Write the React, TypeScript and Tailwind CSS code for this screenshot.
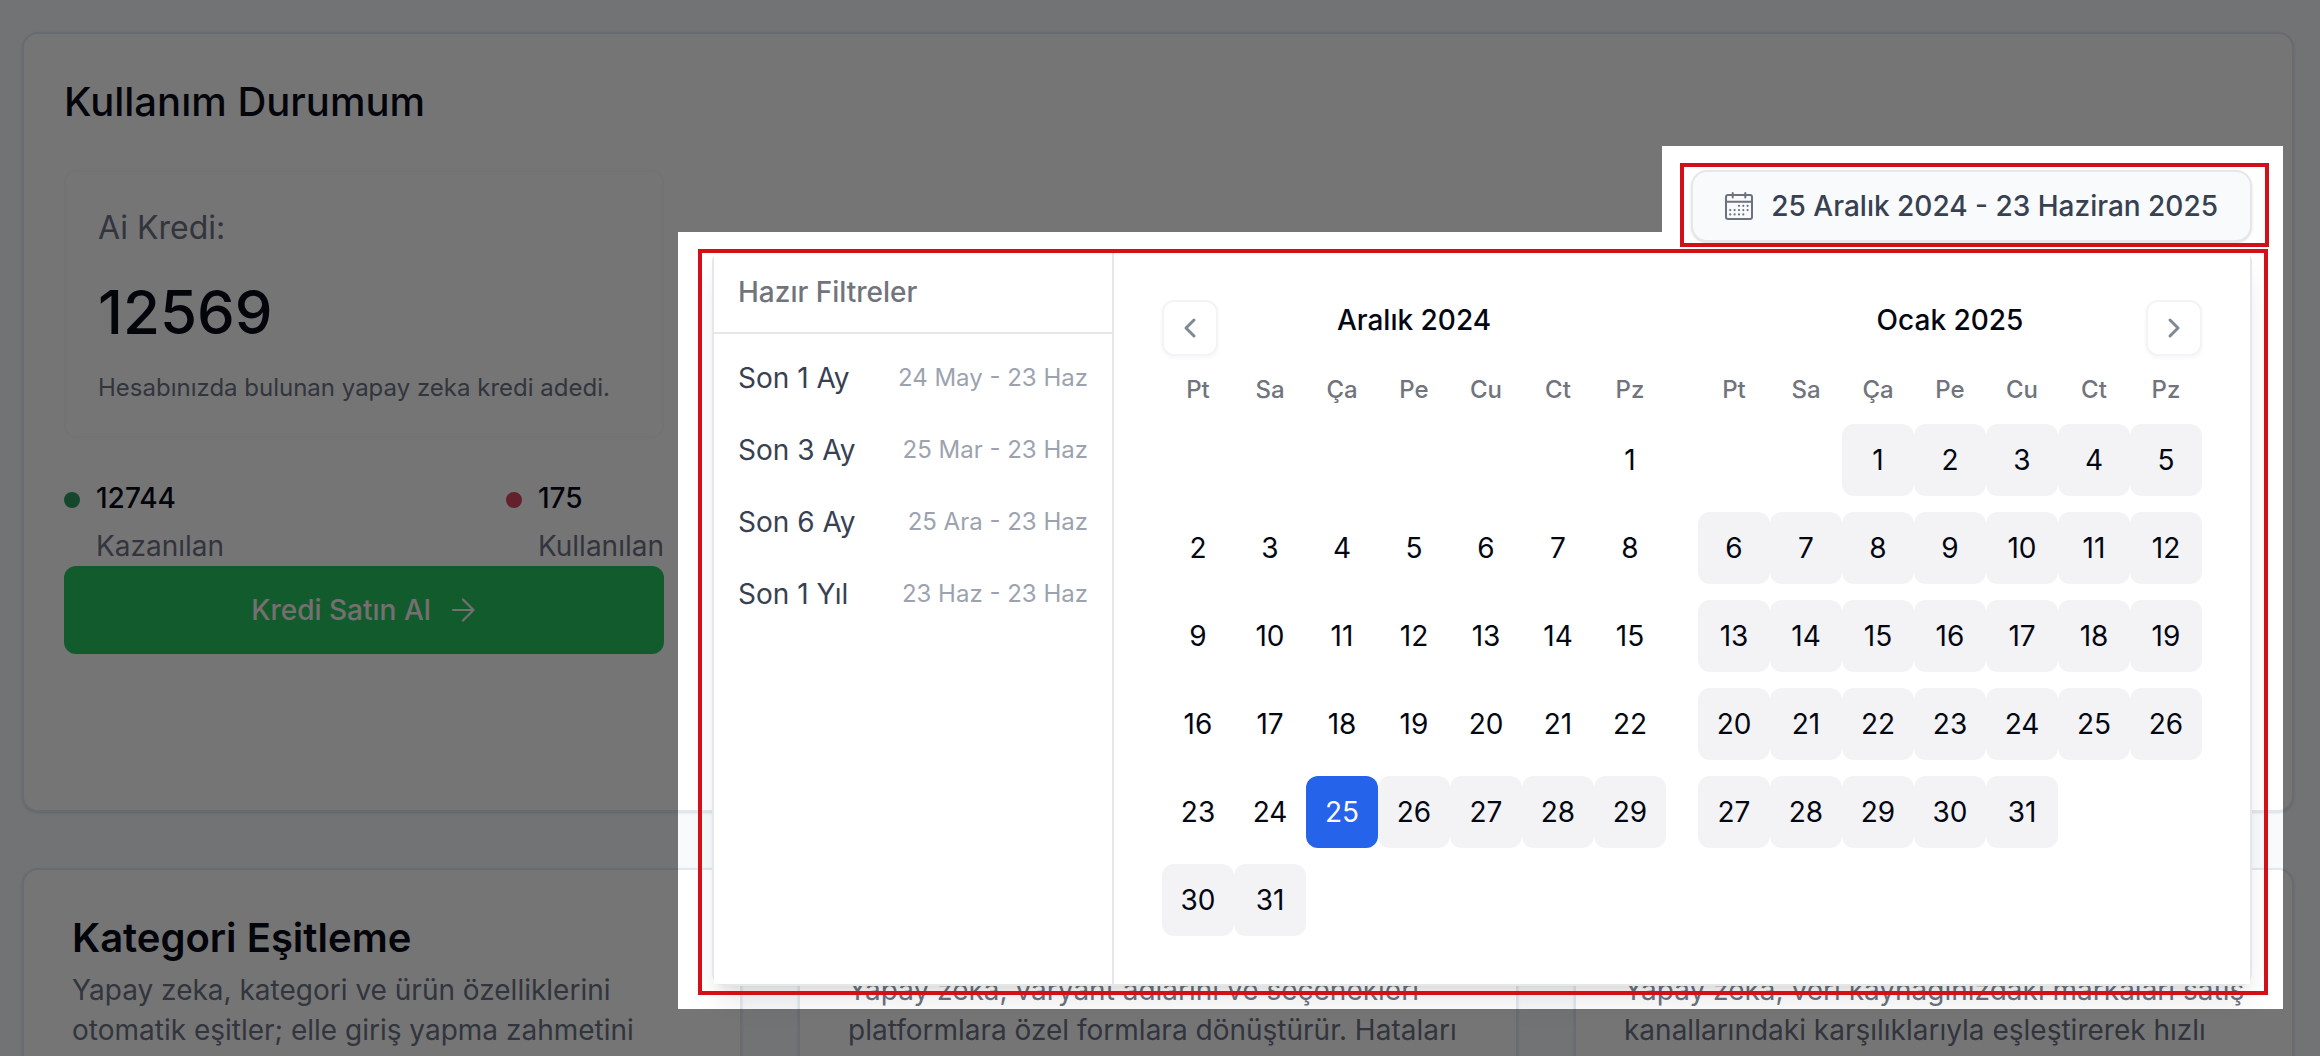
import React from 'react';

interface StatProps {
    value: string;
    label: string;
    dotClass: string;
}

const Stat: React.FC<StatProps> = ({ value, label, dotClass }) => (
    <div className="flex gap-4">
        <span className={`mt-3.5 size-4 rounded-full ${dotClass}`} />
        <div>
            <p className="text-[28px] leading-10 font-medium text-[#030712]">{value}</p>
            <p className="mt-2 text-[28px] leading-10 text-[#6b7280]">{label}</p>
        </div>
    </div>
);

const CalendarIcon: React.FC = () => (
    <svg viewBox="0 0 28 28" fill="none" stroke="currentColor" strokeLinecap="round" className="size-7 text-[#6b7280]" aria-hidden="true">
        <rect x="1" y="3" width="26" height="24" rx="2" strokeWidth="2" />
        <path d="M1 9.7h26M7.7 1v4.6M20.3 1v4.6" strokeWidth="2" />
        <path
            d="M14 13.8h.01M18.3 13.8h.01M22.6 13.8h.01M5.2 18.1h.01M9.6 18.1h.01M14 18.1h.01M18.3 18.1h.01M22.6 18.1h.01M5.2 22.4h.01M9.6 22.4h.01M14 22.4h.01M18.3 22.4h.01"
            strokeWidth="2.2"
        />
    </svg>
);

interface NavButtonProps {
    direction: 'prev' | 'next';
    className?: string;
}

const NavButton: React.FC<NavButtonProps> = ({ direction, className = "" }) => (
    <button
        type="button"
        aria-label={direction === 'prev' ? 'Önceki ay' : 'Sonraki ay'}
        className={`absolute top-0 flex size-14 items-center justify-center rounded-xl border-2 border-[#f3f4f6] bg-white text-[#808894] shadow-[0_2px_4px_rgba(0,0,0,0.04)] ${className}`}
    >
        <svg viewBox="0 0 24 24" fill="none" stroke="currentColor" strokeWidth="3" strokeLinecap="round" strokeLinejoin="round" className="size-6">
            <path d={direction === 'prev' ? 'M16 4 8 12l8 8' : 'M8 4l8 8-8 8'} />
        </svg>
    </button>
);

const WEEKDAYS = ['Pt', 'Sa', 'Ça', 'Pe', 'Cu', 'Ct', 'Pz'];

interface MonthProps {
    title: string;
    offset: number;
    rangeFrom: number;
    selected?: number;
}

const Month: React.FC<MonthProps> = ({ title, offset, rangeFrom, selected }) => {
    const cells: (number | null)[] = [
        ...Array(offset).fill(null),
        ...Array.from({ length: 31 }, (_, i) => i + 1)
    ];
    while (cells.length % 7 !== 0) cells.push(null);

    const weeks: (number | null)[][] = [];
    for (let i = 0; i < cells.length; i += 7) {
        weeks.push(cells.slice(i, i + 7));
    }

    const dayClass = (day: number) => {
        if (day === selected) return "bg-[#2563eb] text-[#f9fafb]";
        if (day >= rangeFrom) return "bg-[#f3f3f5] text-[#030712]";
        return "text-[#030712]";
    };

    return (
        <div>
            <h3 className="text-center text-[28px] leading-10 font-medium text-[#030712]">{title}</h3>
            <table className="mt-8">
                <thead>
                    <tr>
                        {WEEKDAYS.map(day => (
                            <th key={day} scope="col" className="w-[72px] p-0 text-center text-2xl leading-9 font-medium text-[#71747c]">
                                {day}
                            </th>
                        ))}
                    </tr>
                </thead>
                <tbody>
                    {weeks.map((week, i) => (
                        <tr key={i}>
                            {week.map((day, j) => (
                                <td key={j} className="p-0 pt-4">
                                    {day !== null && (
                                        <button
                                            type="button"
                                            className={`block size-[72px] rounded-xl text-center text-[28px] leading-10 ${dayClass(day)}`}
                                        >
                                            {day}
                                        </button>
                                    )}
                                </td>
                            ))}
                        </tr>
                    ))}
                </tbody>
            </table>
        </div>
    );
};

const PRESETS = [
    { label: 'Son 1 Ay', range: '24 May - 23 Haz' },
    { label: 'Son 3 Ay', range: '25 Mar - 23 Haz' },
    { label: 'Son 6 Ay', range: '25 Ara - 23 Haz' },
    { label: 'Son 1 Yıl', range: '23 Haz - 23 Haz' }
];

const DateRangePopover: React.FC = () => (
    <div className="absolute top-full right-0 mt-2 flex w-max rounded-xl border-2 border-[#e5e7eb] shadow-[0_20px_30px_-6px_rgba(0,0,0,0.1),0_8px_12px_-8px_rgba(0,0,0,0.1)]">
        <div className="w-[400px] border-r-2 border-[#e5e7eb] bg-white">
            <h3 className="border-b-2 border-[#e5e7eb] px-6 py-5 text-[28px] leading-10 font-medium text-[#71747c]">Hazır Filtreler</h3>
            <ul className="py-2">
                {PRESETS.map(preset => (
                    <li key={preset.label}>
                        <button type="button" className="flex w-full items-center justify-between px-6 py-4 leading-10">
                            <span className="text-[28px] text-[#374151]">{preset.label}</span>
                            <span className="text-2xl leading-10 text-[#9ca3af]">{preset.range}</span>
                        </button>
                    </li>
                ))}
            </ul>
        </div>
        <div className="bg-white p-12">
            <div className="relative flex gap-8">
                <NavButton direction="prev" className="left-0" />
                <Month title="Aralık 2024" offset={6} rangeFrom={26} selected={25} />
                <Month title="Ocak 2025" offset={2} rangeFrom={1} />
                <NavButton direction="next" className="right-0" />
            </div>
        </div>
    </div>
);

const FEATURES = [
    {
        title: 'Kategori Eşitleme',
        text: 'Yapay zeka, kategori ve ürün özelliklerini otomatik eşitler; elle giriş yapma zahmetini'
    },
    {
        title: 'Varyant Eşitleme',
        text: 'Yapay zeka, varyant adlarını ve seçenekleri platformlara özel formlara dönüştürür. Hataları'
    },
    {
        title: 'Marka Eşitleme',
        text: 'Yapay zeka, veri kaynağınızdaki markaları satış kanallarındaki karşılıklarıyla eşleştirerek hızlı'
    }
];

export default function App() {
    return (
        <div className="relative h-screen overflow-hidden bg-[#f8fafc] py-8 pr-[26px] pl-[22px] font-['Inter',sans-serif]">
            <section className="relative z-10 rounded-2xl border-2 border-[#e2e8f0] bg-white px-10 pt-10 pb-[156px] shadow-sm">
                <h1 className="text-[40px] leading-[56px] font-medium text-[#030712]">Kullanım Durumum</h1>

                <div className="mt-10 flex items-start justify-between">
                    <div className="w-[600px]">
                        <div className="rounded-xl border-2 border-[#fafafa] px-8 pt-8 pb-[30px]">
                            <p className="text-[32px] leading-[48px] text-[#6b7280]">Ai Kredi:</p>
                            <p className="mt-4 text-[60px] leading-[88px] font-medium text-[#030712]">12569</p>
                            <p className="mt-3.5 text-2xl leading-9 text-[#6b7280]">Hesabınızda bulunan yapay zeka kredi adedi.</p>
                        </div>
                        <div className="mt-10 flex justify-between">
                            <Stat value="12744" label="Kazanılan" dotClass="bg-[#2b9a5b]" />
                            <Stat value="175" label="Kullanılan" dotClass="bg-[#d4465c]" />
                        </div>
                        <button
                            type="button"
                            className="flex h-[88px] w-full items-center justify-center gap-4.5 rounded-xl bg-[#22c55e] text-[28px] leading-10 font-medium text-[#fff1f2]"
                        >
                            Kredi Satın Al
                            <svg viewBox="0 0 28 28" fill="none" stroke="currentColor" strokeWidth="2.2" strokeLinecap="round" strokeLinejoin="round" className="size-7">
                                <path d="M4 14h20.5M14 3.5 24.5 14 14 24.5" />
                            </svg>
                        </button>
                    </div>

                    <div className="relative">
                        <button
                            type="button"
                            aria-expanded="true"
                            className="flex h-[72px] items-center gap-4.5 rounded-2xl border-2 border-[#e5e7eb] bg-[#f9fafc] px-8 text-[28px] leading-10 font-medium text-[#374151] shadow-sm"
                        >
                            <CalendarIcon />
                            25 Aralık 2024 - 23 Haziran 2025
                        </button>
                        <DateRangePopover />
                    </div>
                </div>
            </section>

            <div className="mt-14 grid grid-cols-3 gap-14">
                {FEATURES.map(feature => (
                    <article key={feature.title} className="h-[400px] rounded-2xl border-2 border-[#e2e8f0] bg-white pt-10 pr-8 pl-12 shadow-sm">
                        <h2 className="text-[40px] leading-[56px] font-semibold text-[#030712]">{feature.title}</h2>
                        <p className="mt-1 text-[28px] leading-10 text-[#6b7280]">{feature.text}</p>
                    </article>
                ))}
            </div>

            {/* Dimmed backdrop, cut out around the trigger and its popover */}
            <div className="pointer-events-none absolute inset-0 z-20 bg-[#040406]/55 [clip-path:polygon(evenodd,0_0,100%_0,100%_100%,0_100%,0_0,calc(100%-658px)_146px,calc(100%-37px)_146px,calc(100%-37px)_1009px,calc(100%-1642px)_1009px,calc(100%-1642px)_232px,calc(100%-658px)_232px,calc(100%-658px)_146px,0_0)]" />
            <div className="pointer-events-none absolute top-[163px] right-[51px] z-30 h-[84px] w-[589px] border-4 border-[#d30f17]" />
            <div className="pointer-events-none absolute top-[249px] right-[52px] z-30 h-[746px] w-[1570px] border-4 border-[#d30f17]" />
        </div>
    );
}
